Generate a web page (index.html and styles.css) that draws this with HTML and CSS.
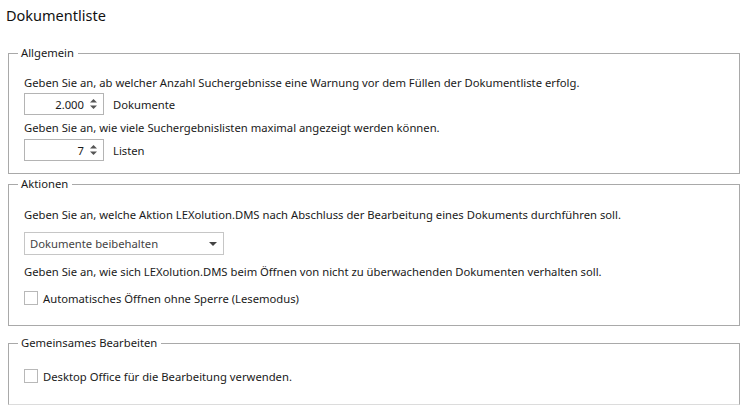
FILE: index.html
```html
<!DOCTYPE html>
<html lang="de">
<head>
<meta charset="utf-8">
<link rel="stylesheet" href="styles.css">
</head>
<body>
<div class="page">
  <h1 class="title">Dokumentliste</h1>

  <fieldset class="group g1">
    <legend>Allgemein</legend>
    <p class="desc">Geben Sie an, ab welcher Anzahl Suchergebnisse eine Warnung vor dem Füllen der Dokumentliste erfolg.</p>
    <div class="row r1">
      <div class="spin"><span class="val">2.000</span><span class="arrows"><svg width="9" height="14" viewBox="0 0 9 14"><path d="M1 5.5 L4.5 2 L8 5.5 Z" fill="#555"/><path d="M1 8.5 L4.5 12 L8 8.5 Z" fill="#555"/></svg></span></div>
      <span class="unit">Dokumente</span>
    </div>
    <p class="desc">Geben Sie an, wie viele Suchergebnislisten maximal angezeigt werden können.</p>
    <div class="row r2">
      <div class="spin"><span class="val">7</span><span class="arrows"><svg width="9" height="14" viewBox="0 0 9 14"><path d="M1 5.5 L4.5 2 L8 5.5 Z" fill="#555"/><path d="M1 8.5 L4.5 12 L8 8.5 Z" fill="#555"/></svg></span></div>
      <span class="unit">Listen</span>
    </div>
  </fieldset>

  <fieldset class="group g2">
    <legend>Aktionen</legend>
    <p class="desc">Geben Sie an, welche Aktion LEXolution.DMS nach Abschluss der Bearbeitung eines Dokuments durchführen soll.</p>
    <div class="select"><span>Dokumente beibehalten</span><svg width="8" height="4" viewBox="0 0 8 4"><path d="M0 0 L8 0 L4 4 Z" fill="#444"/></svg></div>
    <p class="desc">Geben Sie an, wie sich LEXolution.DMS beim Öffnen von nicht zu überwachenden Dokumenten verhalten soll.</p>
    <label class="check"><span class="box"></span>Automatisches Öffnen ohne Sperre (Lesemodus)</label>
  </fieldset>

  <fieldset class="group g3">
    <legend>Gemeinsames Bearbeiten</legend>
    <label class="check"><span class="box"></span>Desktop Office für die Bearbeitung verwenden.</label>
  </fieldset>
</div>
</body>
</html>
```

FILE: styles.css
```css
* { box-sizing: border-box; }
html, body { margin: 0; padding: 0; background: #fff; }
body {
  font-family: "Noto Sans", "Open Sans", sans-serif;
  font-size: 11.25px;
  color: #1a1a1a;
}
.page { padding: 4px 7px 0 8px; width: 747px; }
.title {
  font-size: 14.5px;
  font-weight: normal;
  margin: 0 0 0 -2px;
  line-height: 23px;
  color: #111;
}
.group {
  margin: 0;
  border: 1px solid #a9a9a9;
  padding: 0 15px;
  min-width: 0;
}
.group legend {
  padding: 0 4px 0 3px;
  margin-left: -6px;
  line-height: 16px;
}
.g1 { margin-top: 18px; padding-top: 14px; padding-bottom: 12px; }
.g2 { margin-top: 2px; padding-top: 15px; padding-bottom: 20px; }
.g3 { margin-top: 9px; padding-top: 18px; padding-bottom: 21px; border-bottom-color: #dcdcdc; }
.desc { margin: 0; line-height: 16px; }
.row { display: flex; align-items: center; }
.r1 { margin: 2px 0 5px 0; }
.r2 { margin: 3px 0 0 0; }
.spin {
  width: 80px; height: 22px;
  border: 1px solid #b4b4b4;
  display: flex; align-items: center; justify-content: flex-end;
  padding-right: 5px;
}
.spin .val { margin-right: 5px; }
.arrows { display: flex; align-items: center; }
.arrows svg { display: block; }
.unit { margin-left: 9px; }
.select {
  width: 200px; height: 23px;
  border: 1px solid #c6c6c6;
  margin: 9px 0 9px 0;
  display: flex; align-items: center; justify-content: space-between;
  padding: 0 6px 0 5px;
  color: #444;
}
.select svg { display: block; }
.check { display: flex; align-items: center; height: 14px; }
.g2 .check { margin-top: 11px; }
.box {
  width: 14px; height: 14px;
  border: 1px solid #b8b8b8;
  margin-right: 5px;
  background: #fff;
  flex: none;
}
```
